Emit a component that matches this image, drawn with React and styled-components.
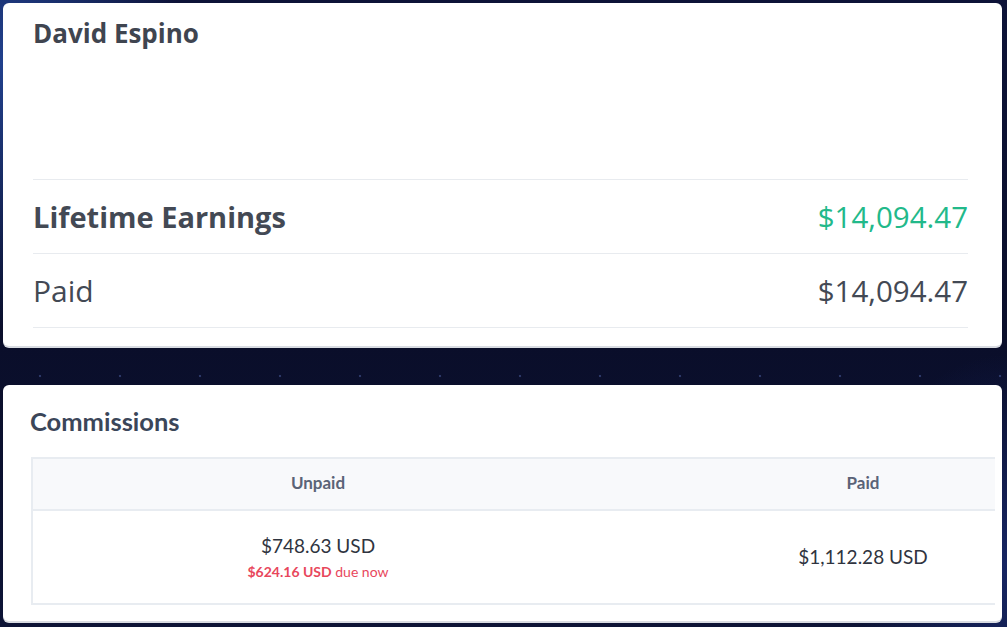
import React from "react";
import styled, { createGlobalStyle } from "styled-components";

const GlobalStyle = createGlobalStyle`
  html, body {
    margin: 0;
    padding: 0;
  }

  body {
    width: 1007px;
    height: 627px;
    overflow: hidden;
    background:
      radial-gradient(circle at 40px 36px, rgba(130, 160, 255, 0.5) 0, rgba(130, 160, 255, 0) 1.6px) 0 340px / 80px 80px,
      radial-gradient(ellipse 260px 380px at 0% 10%, rgba(40, 80, 170, 0.75), rgba(40, 80, 170, 0) 70%),
      radial-gradient(ellipse 220px 300px at 100% 90%, rgba(30, 50, 130, 0.6), rgba(30, 50, 130, 0) 70%),
      linear-gradient(180deg, #0d1338 0%, #0a0e2a 55%, #0d1436 100%);
  }
`;

const Page = styled.main`
  display: flex;
  flex-direction: column;
  gap: 39px;
  padding: 3px 5px 0 3px;
`;

const Card = styled.section`
  background: #ffffff;
  border-radius: 6px;
  box-shadow: 0 2px 0 #d9dce2;
  padding: ${(p) => p.$padding};
  overflow: hidden;
`;

const Header = styled.div`
  height: 162px;
  padding-top: 14px;
`;

const Name = styled.h2`
  margin: 0;
  font-family: "Open Sans", sans-serif;
  font-weight: 700;
  font-size: 26px;
  line-height: 32px;
  color: #3f4550;
`;

const Row = styled.div`
  display: flex;
  align-items: center;
  justify-content: space-between;
  height: 73px;
  border-top: 1px solid #e8ebef;

  &:last-child {
    border-bottom: 1px solid #e8ebef;
  }
`;

const RowLabel = styled.span`
  font-family: "Open Sans", sans-serif;
  font-size: ${(p) => (p.$bold ? "29px" : "30px")};
  font-weight: ${(p) => (p.$bold ? 700 : 400)};
  color: #434954;
`;

const RowValue = styled.span`
  font-family: "Open Sans", sans-serif;
  font-size: 29.5px;
  font-weight: 400;
  color: ${(p) => (p.$green ? "#22b98a" : "#434954")};
`;

const Title = styled.h3`
  margin: 0 0 0 -1px;
  font-family: "Lato", sans-serif;
  font-weight: 700;
  font-size: 25.5px;
  line-height: 32px;
  color: #3b4659;
`;

const TableWrap = styled.div`
  margin-top: 20px;
  overflow: hidden;
  border-left: 2px solid #e8ecf1;
`;

const Table = styled.div`
  display: grid;
  grid-template-columns: 570px 520px;
  width: 1090px;
`;

const HeadCell = styled.div`
  display: flex;
  align-items: center;
  justify-content: center;
  height: 54px;
  padding-bottom: 3px;
  box-sizing: border-box;
  background: #f8f9fb;
  border-top: 2px solid #e8ecf1;
  border-bottom: 2px solid #e8ecf1;
  font-family: "Lato", sans-serif;
  font-weight: 700;
  font-size: 17px;
  color: #5a6377;
`;

const BodyCell = styled.div`
  display: flex;
  flex-direction: column;
  align-items: center;
  justify-content: center;
  height: 94px;
  border-bottom: 2px solid #e8ecf1;
  padding-top: ${(p) => (p.$shift ? "2px" : "0")};
  box-sizing: border-box;
`;

const Amount = styled.div`
  font-family: "Lato", sans-serif;
  font-size: 19px;
  line-height: 24px;
  color: #2f3440;
`;

const Due = styled.div`
  margin-top: 4px;
  font-family: "Lato", sans-serif;
  font-size: 14px;
  line-height: 20px;
  color: #e8475c;

  strong {
    font-weight: 700;
  }
`;

const App = () => {
  return (
    <>
      <GlobalStyle />
      <Page>
        <Card $padding="0 34px 18px 30px">
          <Header>
            <Name>David Espino</Name>
          </Header>
          <Row>
            <RowLabel $bold>Lifetime Earnings</RowLabel>
            <RowValue $green>$14,094.47</RowValue>
          </Row>
          <Row>
            <RowLabel>Paid</RowLabel>
            <RowValue>$14,094.47</RowValue>
          </Row>
        </Card>
        <Card $padding="20px 7px 16px 28px">
          <Title>Commissions</Title>
          <TableWrap>
            <Table>
              <HeadCell>Unpaid</HeadCell>
              <HeadCell>Paid</HeadCell>
              <BodyCell $shift>
                <Amount>$748.63 USD</Amount>
                <Due>
                  <strong>$624.16 USD</strong> due now
                </Due>
              </BodyCell>
              <BodyCell>
                <Amount>$1,112.28 USD</Amount>
              </BodyCell>
            </Table>
          </TableWrap>
        </Card>
      </Page>
    </>
  );
};

export default App;
